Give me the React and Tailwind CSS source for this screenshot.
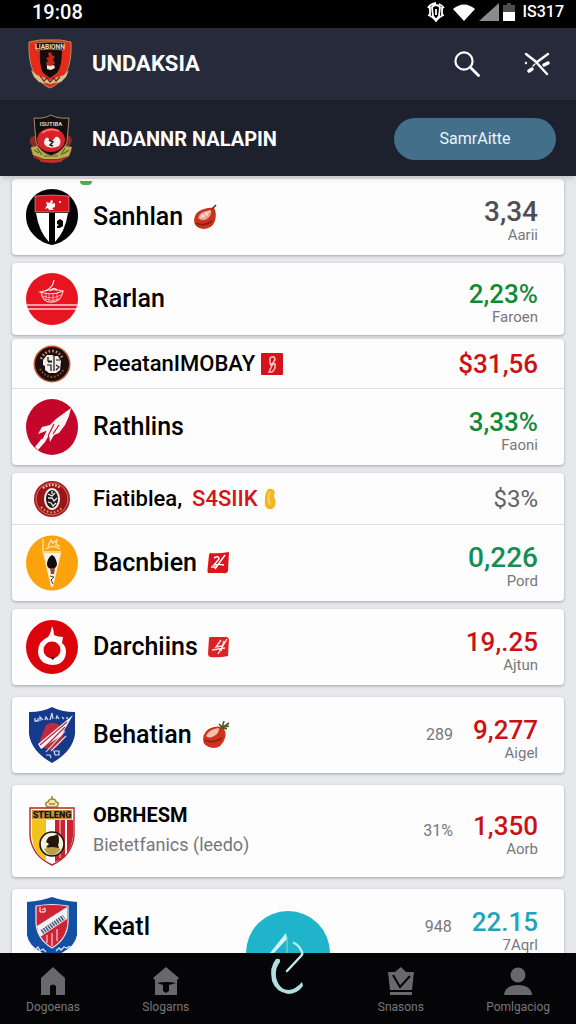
import React from 'react';
import clsx from 'clsx';

/* ---------- Header crests ---------- */

const MainCrest = () => (
    <svg viewBox="0 0 44 50" className="w-11 h-[50px]" aria-hidden="true">
        <path d="M1 3 Q12 0 22 1 Q32 0 43 3 Q44 22 38 34 Q32 45 22 49 Q12 45 6 34 Q0 22 1 3Z" fill="#e32a1b" stroke="#b9924f" strokeWidth="1" />
        <path d="M12 10 H34 Q34 28 29 34 L22 39 L15 34 Q11 26 12 10Z" fill="#120c0c" />
        <path d="M7 4 Q22 2 37 4 L36 11 Q22 9 8 11Z" fill="#130e0d" stroke="#c49a55" strokeWidth=".8" />
        <text x="22" y="9.6" fontSize="6.5" fontWeight="700" textAnchor="middle" fill="#eadfc8" fontFamily="Roboto, sans-serif">LIABIONN</text>
        <path d="M20 14 l3-1 l1 3 l3 2 l-2 3 l2 3 l-3 3 l-5 0 l-1-3 l2-2 l-2-3 l3-1Z" fill="#c4261a" />
        <path d="M19 26 l3 1 l4-1 l1 3 l-4 2 l-4-1Z" fill="#f2e6dd" />
        <path d="M3 31 L9 36 L22 41 L36 36 L41 31 L38 38 L33 43 L22 46 L11 43 L6 38Z" fill="#d8bd8b" />
        <path d="M12 37 l4 5 l3-3 l3 4 l4-4 l2 3 l4-4" stroke="#5b2a1c" strokeWidth="1.2" fill="none" />
        <path d="M15 43 L22 48 L30 43 L22 45Z" fill="#df3121" />
    </svg>
);

const SubCrest = () => (
    <svg viewBox="0 0 46 50" className="w-[46px] h-[50px]" aria-hidden="true">
        <path d="M7 22 Q1 22 2 29 L5 33 L2 35 L6 44 L16 48 L30 48 L40 44 L44 36 L41 33 L44 27 Q44 22 39 21Z" fill="#8e2b27" />
        <path d="M3 33 L10 32 L16 39 L30 39 L37 32 L44 33 L41 42 L30 45 L16 45 L5 41Z" fill="#b7b04c" />
        <path d="M6 36 l5 3 M9 34 l5 7 M37 34 l-4 7 M41 36 l-6 4 M16 42 h14" stroke="#5c6425" strokeWidth="1.2" />
        <path d="M6 4 Q16 5 23 1 Q30 5 41 4 L39 28 Q35 38 23 42 Q11 38 8 28Z" fill="#13100f" stroke="#a98a62" strokeWidth="1" />
        <text x="23" y="12" fontSize="6" fontWeight="700" textAnchor="middle" fill="#d8d2cc" fontFamily="Roboto, sans-serif">ISUTIBA</text>
        <ellipse cx="23" cy="26" rx="14" ry="12" fill="#d9222b" />
        <path d="M14 19 Q22 13 31 17" stroke="#f08585" strokeWidth="1.5" fill="none" />
        <path d="M17 25 Q14 31 20 33 Q25 35 31 32 Q34 27 31 24 Q28 21 26 25 Q23 29 21 25 Q19 22 17 25Z" fill="#f7eeee" />
        <path d="M21 26 l4 2 l-3 3 l3 1" stroke="#22181a" strokeWidth="1.4" fill="none" />
        <path d="M9 43 L16 46 H30 L38 43 L33 48 L23 49 L13 48Z" fill="#c02f28" />
    </svg>
);

/* ---------- Team crests ---------- */

const SanhlanCrest = () => (
    <svg viewBox="0 0 52 56" className="w-13 h-14" aria-hidden="true">
        <path d="M26 0 A26 26 0 0 1 52 27 C52 43 38 54 26 56 C14 54 0 43 0 27 A26 26 0 0 1 26 0Z" fill="#050505" />
        <path d="M9 7 Q26 5 43 7 V23 H9Z" fill="#d4141c" stroke="#e9b3b3" strokeWidth=".6" />
        <path d="M10 24 H23 V53 Q13 43 10 24Z" fill="#fff" />
        <path d="M42 24 H29 V53 Q39 43 42 24Z" fill="#fff" />
        <path d="M20 13 l4 1 l1-3 l2 1 l-1 3 l3-1 l0 4 l-3 1 l2 2 l-5 0 l-1-2 l-3 1 l2-4Z" fill="#fff" />
        <circle cx="34" cy="13" r="1" fill="#fff" />
        <path d="M31 32 l3-2 l3 2 l0 5 l-3 2 l-3 0 l0-2 l2-1 l-2-1Z" fill="#050505" />
    </svg>
);

const RarlanCrest = () => (
    <svg viewBox="0 0 52 52" className="w-13 h-13" aria-hidden="true">
        <circle cx="26" cy="26" r="26" fill="#e8141f" />
        <path d="M15 19 Q17 30 26 29 Q35 29 37 18" fill="none" stroke="#f6c6c6" strokeWidth="1.3" />
        <path d="M14 19 Q26 15 37 18 Q26 23 14 19Z" fill="none" stroke="#fbdcdc" strokeWidth="1.1" />
        <path d="M17 23 Q26 27 35 22 M19 26 Q26 29 33 26 M20 20 v6 M23 21 v7 M27 21 v7 M31 20 v7" stroke="#f2b0b0" strokeWidth=".9" fill="none" />
        <path d="M19 18 Q27 15 28 7 M24 18 Q27 14 31 17" stroke="#fff" strokeWidth="1.2" fill="none" />
        <path d="M1 32 H51 M2 36 H50" stroke="#f8d3d3" strokeWidth="1.5" />
    </svg>
);

const PeeatanCrest = () => (
    <svg viewBox="0 0 38 38" className="w-[38px] h-[38px]" aria-hidden="true">
        <circle cx="19" cy="19" r="18.5" fill="#c65a2d" />
        <circle cx="19" cy="19" r="17" fill="#1b1010" />
        <path d="M8 14 Q12 6 19 6 Q26 6 30 14" fill="none" stroke="#d98a62" strokeWidth="2.6" strokeDasharray="1.6 2" />
        <path d="M7 24 Q12 32 19 32 Q26 32 31 24" fill="none" stroke="#a8502f" strokeWidth="2" strokeDasharray="1.4 2" />
        <path d="M14 10 h5 l2 1 h4 l3 5 l-1 9 l-4 3 h-7 l-4-3 l0-4 l-2-1 l0-5Z" fill="#f3eeea" />
        <path d="M15 12 v4 h4 M21 11 v15 M23 15 h4 M14 20 h4 v6 M23 20 l3 2 l-3 3 M15 17 h4" stroke="#1a1313" strokeWidth="1.2" fill="none" />
    </svg>
);

const RathlinsCrest = () => (
    <svg viewBox="0 0 52 56" className="w-13 h-14" aria-hidden="true">
        <ellipse cx="26" cy="28" rx="26" ry="28" fill="#c4062b" />
        <path d="M45 9 L30 20 L24 26 L16 28 L12 35 L20 32 L17 38 L9 48 L12 51 L19 43 L23 36 L24 43 L28 36 L33 34 L39 26 L43 17Z" fill="#fbf3f5" />
        <path d="M28 25 L22 37 M33 26 L27 35 M20 32 L16 40" stroke="#c4062b" strokeWidth="1.1" />
    </svg>
);

const FiatibleaCrest = () => (
    <svg viewBox="0 0 38 38" className="w-[38px] h-[38px]" aria-hidden="true">
        <circle cx="19" cy="19" r="18" fill="#a81c1f" />
        <circle cx="19" cy="19" r="16" fill="#9a1518" stroke="#dc8a6c" strokeWidth=".8" />
        <path d="M10 8 Q19 2 28 8" stroke="#f0d3b8" strokeWidth="2.2" strokeDasharray="1.6 1.6" fill="none" />
        <path d="M8 27 Q19 38 30 27" stroke="#dc9a6d" strokeWidth="2" strokeDasharray="1.6 2" fill="none" />
        <ellipse cx="19" cy="19" rx="8" ry="11" fill="#f2ecea" />
        <ellipse cx="19" cy="19" rx="6" ry="9" fill="#1f191a" />
        <path d="M15 14 l4 2 l3-3 M15 18 l4 0 l2 3 l3-3 M15 22 l3 1 l2 3 l3-3 M19 11 v3" stroke="#eee" strokeWidth="1.3" fill="none" />
    </svg>
);

const BacnbienCrest = () => (
    <svg viewBox="0 0 52 56" className="w-13 h-14" aria-hidden="true">
        <ellipse cx="26" cy="28" rx="26" ry="27.5" fill="#fca20c" />
        <path d="M17 4 V18 M17 17 H35 M20 14 Q26 9 34 14 M22 11 L25 5 L27 8 L31 5 L30 10 L34 11" stroke="#fbe2ab" strokeWidth="1.4" fill="none" />
        <path d="M17 18 H35 L27 52 H25Z" fill="#f7f1e4" />
        <path d="M26 20 Q21 23 21 30 Q22 34 26 34 Q31 33 31 29 Q30 22 26 20Z" fill="#120d0c" />
        <path d="M24 33 h5 l-1 6 l-3 0Z" fill="#8d4630" />
        <path d="M24 41 l4 1 l-3 3 l2 4" stroke="#4b3a2e" strokeWidth="1" fill="none" />
    </svg>
);

const DarchiinsCrest = () => (
    <svg viewBox="0 0 52 54" className="w-13 h-[54px]" aria-hidden="true">
        <ellipse cx="26" cy="27" rx="26" ry="27" fill="#dc040b" />
        <path d="M26 6 Q28 10 28 15 Q32 17 37 17 L36 23 Q40 26 40 32 Q39 45 26 45 Q13 44 12 32 Q12 21 22 17 Q25 13 26 6Z" fill="#fff" />
        <circle cx="26" cy="30" r="8.5" fill="#dc040b" />
        <path d="M24 37 h5 l-2 3Z" fill="#3a0a0a" />
    </svg>
);

const BehatianCrest = () => (
    <svg viewBox="0 0 46 56" className="w-[46px] h-14" aria-hidden="true">
        <path d="M23 0 Q32 5 46 5 V27 Q44 44 23 56 Q2 44 0 27 V5 Q14 5 23 0Z" fill="#16398a" />
        <path d="M6 11 v3 h3 v-3 M11 14 v-4 l3 3 M16 13 l1-3 l2 3 M21 13 l2-7 l1 6 M27 12 l1-3 l2 3 M33 10 l2 2 M37 11 h2" stroke="#cdd8ef" strokeWidth="1.3" fill="none" />
        <path d="M17 18 Q25 13 31 19 L35 26 Q33 39 22 43 Q13 42 11 33Z" fill="#c3283b" />
        <path d="M44 8 L9 37 L12 42 L32 29Z" fill="#f5f5fa" />
        <path d="M38 15 L11 38 M36 20 L15 41" stroke="#b92a3c" strokeWidth="1.2" />
        <path d="M36 24 L17 45 M37 29 L22 44" stroke="#e8ebf5" strokeWidth="1.1" />
        <path d="M17 48 h4 l1 3 M25 44 h5 v4 h-4Z" stroke="#d5dcee" strokeWidth="1.2" fill="none" />
    </svg>
);

const ObrhesmCrest = () => (
    <svg viewBox="0 0 46 70" className="w-[46px] h-[70px]" aria-hidden="true">
        <path d="M18 11 Q15 6 19 6 Q20 3 23 3 Q27 3 27 6 Q31 6 28 11Z" fill="#f2e6b5" stroke="#a9883a" strokeWidth="1.6" />
        <path d="M23 0 V4 M20 8 h6" stroke="#a9883a" strokeWidth="1.6" />
        <path d="M1 12 H45 V40 Q43 60 23 69 Q3 60 1 40Z" fill="#fff" stroke="#b3252a" strokeWidth="1.4" />
        <path d="M3 24 H17 V65 Q4 57 3 40Z" fill="#f2c31c" />
        <path d="M26 24 H36 V60 Q32 64 26 66Z" fill="#cc202b" />
        <path d="M38 24 H44 V40 Q43 50 38 57Z" fill="#cc202b" />
        <path d="M31 24 V62" stroke="#f2d4d4" strokeWidth="1" />
        <rect x="3" y="14" width="40" height="9.5" fill="#bc9638" />
        <text x="23" y="22" fontSize="9" fontWeight="900" textAnchor="middle" fill="#17120a" fontFamily="Roboto, sans-serif">STELENG</text>
        <circle cx="23" cy="48" r="12" fill="#f5efdc" stroke="#191210" strokeWidth="1.6" />
        <path d="M17 46 Q19 39 24 40 L29 38 Q31 45 29 49 L30 52 Q24 55 17 51 L20 48Z" fill="#23160f" />
        <path d="M15 53 Q23 49 32 53 Q28 59 23 59 Q18 59 15 53Z" fill="#bda148" />
    </svg>
);

const KeatlCrest = () => (
    <svg viewBox="0 0 50 60" className="w-[50px] h-[60px]" aria-hidden="true">
        <path d="M0 5 Q14 4 25 0 Q36 4 50 5 V38 Q48 52 25 60 Q2 52 0 38Z" fill="#1350a4" />
        <path d="M9 9 Q25 6 41 9 V26 Q40 42 25 51 Q10 42 9 26Z" fill="#cf2336" stroke="#f0e3e8" strokeWidth="1.2" />
        <path d="M40 10 V22 L13 40 Q11 36 10 29Z" fill="#f1f2f5" />
        <path d="M15 35 L37 20" stroke="#4d5a78" strokeWidth="5" strokeDasharray="1.6 1" />
        <path d="M20 38 v8 M25 36 v13 M30 32 v12" stroke="#efb4bb" strokeWidth="1.4" />
        <path d="M13 10 v5 h5 v-4 l-3 2" stroke="#fff" strokeWidth="1" fill="none" />
        <path d="M6 50 l2 3 l3-3 l2 4 l3-2 l3 3 M29 54 l3-3 l2 2 l3-3 l3 1 l3-2" stroke="#dbe6f5" strokeWidth="1.3" fill="none" />
    </svg>
);

/* ---------- Small marks after the names ---------- */

const FruitMark = () => (
    <svg viewBox="0 0 24 26" className="w-6 h-[26px]" aria-hidden="true">
        <path d="M21 4 Q24 9 22 17 Q19 25 10 25 Q1 24 1 16 Q2 7 11 5 Q17 3 21 4Z" fill="#c9321f" />
        <path d="M5 14 Q7 7 18 6 Q19 12 14 15 Q9 18 5 14Z" fill="#eda08c" />
        <path d="M7 14 L17 7 M8 10 L12 14 M12 8 L15 12" stroke="#fbe4dc" strokeWidth="1.2" />
        <path d="M3 19 Q11 23 19 17" stroke="#8f1c12" strokeWidth="1.6" fill="none" />
        <path d="M19 5 L23 1" stroke="#6b2a16" strokeWidth="1.6" />
    </svg>
);

const TomatoMark = () => (
    <svg viewBox="0 0 28 28" className="w-7 h-7" aria-hidden="true">
        <path d="M20 6 Q25 10 23 17 Q20 27 11 27 Q1 26 1 18 Q2 8 12 6 Q17 5 20 6Z" fill="#cf3320" />
        <path d="M4 15 Q7 8 17 7 Q17 13 12 15 Q7 18 4 15Z" fill="#f0c0ae" />
        <path d="M3 19 Q11 23 20 17" stroke="#94200f" strokeWidth="1.6" fill="none" />
        <path d="M19 7 L27 5 M20 7 L22 0 M20 7 L27 2 M20 6 L17 3 M20 7 L25 8" stroke="#4c5a26" strokeWidth="1.6" />
    </svg>
);

const SquareMark = () => (
    <svg viewBox="0 0 22 22" className="w-[22px] h-[22px]" aria-hidden="true">
        <rect width="22" height="22" rx="1" fill="#d4141a" />
        <path d="M9 11 V5 Q13 2 14 6 Q14 9 9 12 L14 11 Q15 16 11 19 L8 19 L14 6" stroke="#f9c4bd" strokeWidth="1.5" fill="none" />
    </svg>
);

const SlashMark = () => (
    <svg viewBox="0 0 22 22" className="w-[22px] h-[22px]" aria-hidden="true">
        <path d="M3 1 Q11 2 22 0 L21 19 Q20 22 16 21 L1 21 Q0 20 1 13 L2 3Z" fill="#d8161b" />
        <path d="M7 6 Q12 3 12 7 L7 13 L13 12 M18 3 L8 17 M11 12 L17 13 M4 15 L9 15" stroke="#fff" strokeWidth="1.5" fill="none" />
    </svg>
);

const BoltMark = () => (
    <svg viewBox="0 0 22 22" className="w-[22px] h-[22px]" aria-hidden="true">
        <path d="M2 1 H19 L21 3 L20 20 Q11 22 2 21 Q0 20 0 18 L1 2Z" fill="#dc2227" />
        <path d="M13 4 L8 11 L14 10 M19 3 L10 18 M4 14 L17 12 M16 5 L13 15" stroke="#fde3e1" strokeWidth="1.4" fill="none" />
    </svg>
);

const CoinMark = () => (
    <svg viewBox="0 0 12 22" className="w-3 h-[22px]" aria-hidden="true">
        <path d="M4 1 Q9 0 11 4 Q9 8 11 11 Q13 18 8 21 Q2 22 1 17 Q0 6 4 1Z" fill="#f4b524" />
        <path d="M6 4 Q3 9 6 17" stroke="#fbd060" strokeWidth="2" fill="none" />
    </svg>
);

/* ---------- Data ---------- */

const groups = [
    {
        spacing: '',
        rows: [{ name: 'Sanhlan', crest: SanhlanCrest, mark: FruitMark, value: '3,34', label: 'Aarii', tone: 'text-[#4f4f52]', big: true, dot: true }],
    },
    {
        spacing: 'mt-2',
        rows: [{ name: 'Rarlan', crest: RarlanCrest, value: '2,23%', label: 'Faroen', tone: 'text-[#118a35]', height: 'min-h-18' }],
    },
    {
        spacing: 'mt-1',
        rows: [
            { name: 'PeeatanIMOBAY', crest: PeeatanCrest, mark: SquareMark, value: '$31,56', tone: 'text-[#cb1116]', compact: true, height: 'min-h-[50px]' },
            { name: 'Rathlins', crest: RathlinsCrest, value: '3,33%', label: 'Faoni', tone: 'text-[#118a35]' },
        ],
    },
    {
        spacing: 'mt-2',
        rows: [
            { name: 'Fiatiblea,', tag: 'S4SIIK', crest: FiatibleaCrest, mark: CoinMark, value: '$3%', tone: 'text-[#626266]', compact: true, light: true, height: 'min-h-13' },
            { name: 'Bacnbien', crest: BacnbienCrest, mark: SlashMark, value: '0,226', label: 'Pord', tone: 'text-[#138f56]', big: true },
        ],
    },
    {
        spacing: 'mt-2',
        rows: [{ name: 'Darchiins', crest: DarchiinsCrest, mark: BoltMark, value: '19,.25', label: 'Ajtun', tone: 'text-[#cb1116]' }],
    },
    {
        spacing: 'mt-3',
        rows: [{ name: 'Behatian', crest: BehatianCrest, mark: TomatoMark, aside: '289', value: '9,277', label: 'Aigel', tone: 'text-[#cb1116]' }],
    },
    {
        spacing: 'mt-3',
        rows: [{ name: 'OBRHESM', detail: 'Bietetfanics (leedo)', crest: ObrhesmCrest, aside: '31%', value: '1,350', label: 'Aorb', tone: 'text-[#cb1116]', height: 'min-h-23' }],
    },
    {
        spacing: 'mt-3',
        rows: [{ name: 'Keatl', crest: KeatlCrest, aside: '948', value: '22.15', label: '7Aqrl', tone: 'text-[#1fa5bb]' }],
    },
];

/* ---------- Sections ---------- */

const StatusBar = () => (
    <div className="flex h-7 shrink-0 items-center justify-between bg-black pb-1 pl-8 pr-3 text-white">
        <span className="text-xl font-medium leading-6">19:08</span>
        <div className="flex items-center gap-1">
            <svg viewBox="0 0 18 20" className="mr-1 h-5 w-[18px]" fill="none" stroke="#fff" strokeWidth="1.8" aria-hidden="true">
                <path d="M5 5 Q9 1 13 5 L12 14 L9 18 L6 14Z M1 6 Q3 2 9 1 M17 6 Q15 3 12 2 M3 5 V13 M15 5 V13 M1 13 Q5 14 9 19 Q13 14 17 13" />
                <path d="M9 7 V13" />
            </svg>
            <svg viewBox="0 0 22 17" className="h-[17px] w-[22px]" aria-hidden="true">
                <path d="M0 5 Q11 -4 22 5 L11 17Z" fill="#fff" />
            </svg>
            <svg viewBox="0 0 20 18" className="h-[18px] w-5" aria-hidden="true">
                <path d="M20 0 V18 H0Z" fill="#8b8b8b" />
            </svg>
            <svg viewBox="0 0 12 18" className="mr-1 h-[18px] w-3" aria-hidden="true">
                <path d="M0 2 H4 V0 H8 V2 H12 V9 H0Z" fill="#4d4d4d" />
                <path d="M0 9 H12 V18 H0Z" fill="#fff" />
            </svg>
            <span className="text-base font-medium leading-6">IS317</span>
        </div>
    </div>
);

const Header = () => (
    <header className="z-10 shrink-0 text-white shadow-md">
        <div className="flex h-18 items-center bg-[#262a3b] pl-7 pr-6.5">
            <MainCrest />
            <h1 className="ml-5 flex-1 text-[22px] font-bold leading-7">UNDAKSIA</h1>
            <button type="button" aria-label="Search" className="mr-11">
                <svg viewBox="0 0 26 26" className="size-[26px]" fill="none" stroke="#fff" strokeWidth="2.2" strokeLinecap="round" aria-hidden="true">
                    <circle cx="10" cy="10" r="8.6" />
                    <path d="M16.5 16.5 L24.5 24.5" strokeWidth="2.8" />
                </svg>
            </button>
            <button type="button" aria-label="Tools">
                <svg viewBox="0 0 26 24" className="h-6 w-[26px]" fill="none" stroke="#fff" strokeWidth="2.4" strokeLinecap="round" aria-hidden="true">
                    <path d="M2 2 L11 9 L23 22 M24 2 L13 10" />
                    <path d="M11 12 L9 14" strokeWidth="1.4" />
                    <path d="M5 19 L8 17 M20 13 L24 11" strokeWidth="3.4" />
                    <path d="M2 11 L2 11" strokeWidth="2.4" />
                </svg>
            </button>
        </div>
        <div className="flex h-19 items-center border-t border-[#191c28] bg-[#1d202d] pl-7 pr-5">
            <SubCrest />
            <h2 className="ml-[18px] flex-1 text-xl font-bold leading-7">NADANNR NALAPIN</h2>
            <button type="button" className="h-[42px] w-[162px] rounded-full bg-[#436f8b] text-base text-[#eaf6fc]">
                SamrAitte
            </button>
        </div>
    </header>
);

const Row = ({ row }) => {
    const Crest = row.crest;
    const Mark = row.mark;

    return (
        <li
            className={clsx(
                'flex items-center pl-3.5 pr-6.5',
                row.height || 'min-h-19',
                row.compact && 'border-b border-[#dfe1e4]'
            )}
        >
            <div className="flex w-13 shrink-0 justify-center">
                <Crest />
            </div>
            <div className="ml-[15px] min-w-0 flex-1">
                <div className={clsx('flex items-center', row.compact ? 'gap-1.5' : 'gap-2.5')}>
                    <span
                        className={clsx(
                            'whitespace-nowrap text-black',
                            row.detail ? 'text-xl font-bold leading-7' : 'font-medium leading-8',
                            !row.detail && (row.compact ? 'text-[22px]' : 'text-[25px]')
                        )}
                    >
                        {row.name}
                        {row.tag && <span className="ml-2.5 text-[#d4141a]">{row.tag}</span>}
                    </span>
                    {Mark && <Mark />}
                </div>
                {row.detail && <p className="text-lg leading-8 text-[#77777a]">{row.detail}</p>}
            </div>
            {row.aside && <span className="mr-5 text-base text-[#77777a]">{row.aside}</span>}
            <div className={clsx('text-right', row.label && 'pt-2')}>
                <p
                    className={clsx(
                        'leading-7',
                        row.tone,
                        row.light ? 'text-2xl' : 'font-medium',
                        !row.light && (row.big ? 'text-[28px]' : 'text-[26px]')
                    )}
                >
                    {row.value}
                </p>
                {row.label && <p className="text-[15px] leading-[18px] text-[#77777a]">{row.label}</p>}
            </div>
        </li>
    );
};

const NavItem = ({ label, children }) => (
    <a href="#" className="flex flex-col items-center text-xs leading-4 text-[#77777a]">
        <svg viewBox="0 0 28 28" className="mb-1 size-7" fill="#69696b" aria-hidden="true">
            {children}
        </svg>
        {label}
    </a>
);

const BottomNav = () => (
    <nav className="relative z-10 flex h-[71px] shrink-0 items-start justify-between bg-[#050508] px-6.5 pt-3.5">
        <NavItem label="Dogoenas">
            <path d="M14 0 L26 11 V28 H17 V19 Q14 16 11 19 V28 H2 V11Z" />
        </NavItem>
        <NavItem label="Slogarns">
            <path d="M14 0 L27 11 L25 13 V28 H3 V13 L1 11Z" />
            <path d="M5 16 Q14 14 24 16 L17 18 V24 L14 26 L11 24 V18Z" fill="#050508" />
        </NavItem>
        <button type="button" aria-label="Compose" className="w-16 self-stretch">
            <svg viewBox="0 0 84 84" className="absolute -top-[42px] left-1/2 size-[84px] -translate-x-1/2" fill="none" aria-hidden="true">
                <path d="M0 42 A42 42 0 0 1 84 42Z" fill="#1fb4c9" />
                <path d="M24 42 L40 22 L41 28 L28 42Z" fill="#d3f5f5" />
                <path d="M41 26 V42" stroke="#8adbe3" strokeWidth="1" />
                <path d="M48 32 Q53 34 56 41 Q57 43 55 45 L41 60" stroke="#c4ecec" strokeWidth="2.4" strokeLinecap="round" />
                <path d="M30 48 Q35 47 34 51 Q29 57 30 66 Q33 79 43 79 Q50 78 56 71 L57 75 Q51 83 42 83 Q30 81 26 70 Q23 56 30 48Z" fill="#b0dfdf" />
            </svg>
        </button>
        <NavItem label="Snasons">
            <path d="M1 5 L8 5 L14 0 L19 5 L27 5 L25 23 H3Z M3 25 H25 V28 H3Z" />
            <path d="M6 8 L13 20 L23 9" fill="none" stroke="#050508" strokeWidth="2" />
        </NavItem>
        <NavItem label="Pomlgaciog">
            <circle cx="14" cy="8" r="7.5" />
            <path d="M0 28 Q1 18 14 18 Q27 18 28 28Z" />
        </NavItem>
    </nav>
);

const App = () => (
    <div className="flex h-screen flex-col overflow-hidden bg-[#e6e8ec] font-['Roboto',sans-serif]">
        <StatusBar />
        <Header />
        <main className="min-h-0 flex-1 overflow-y-auto px-3 pt-[3px] [scrollbar-width:none]">
            {groups.map((group, i) => (
                <ul key={i} className={clsx('relative rounded bg-[#fdfdfe] shadow-[0_1px_3px_rgba(0,0,0,0.3)]', group.spacing)}>
                    {group.rows.map((row) => (
                        <Row key={row.name} row={row} />
                    ))}
                    {group.rows[0].dot && <span className="absolute left-17 top-0.5 h-1 w-3 rounded-b-full bg-[#4caf50]" />}
                </ul>
            ))}
        </main>
        <BottomNav />
    </div>
);

export default App;
